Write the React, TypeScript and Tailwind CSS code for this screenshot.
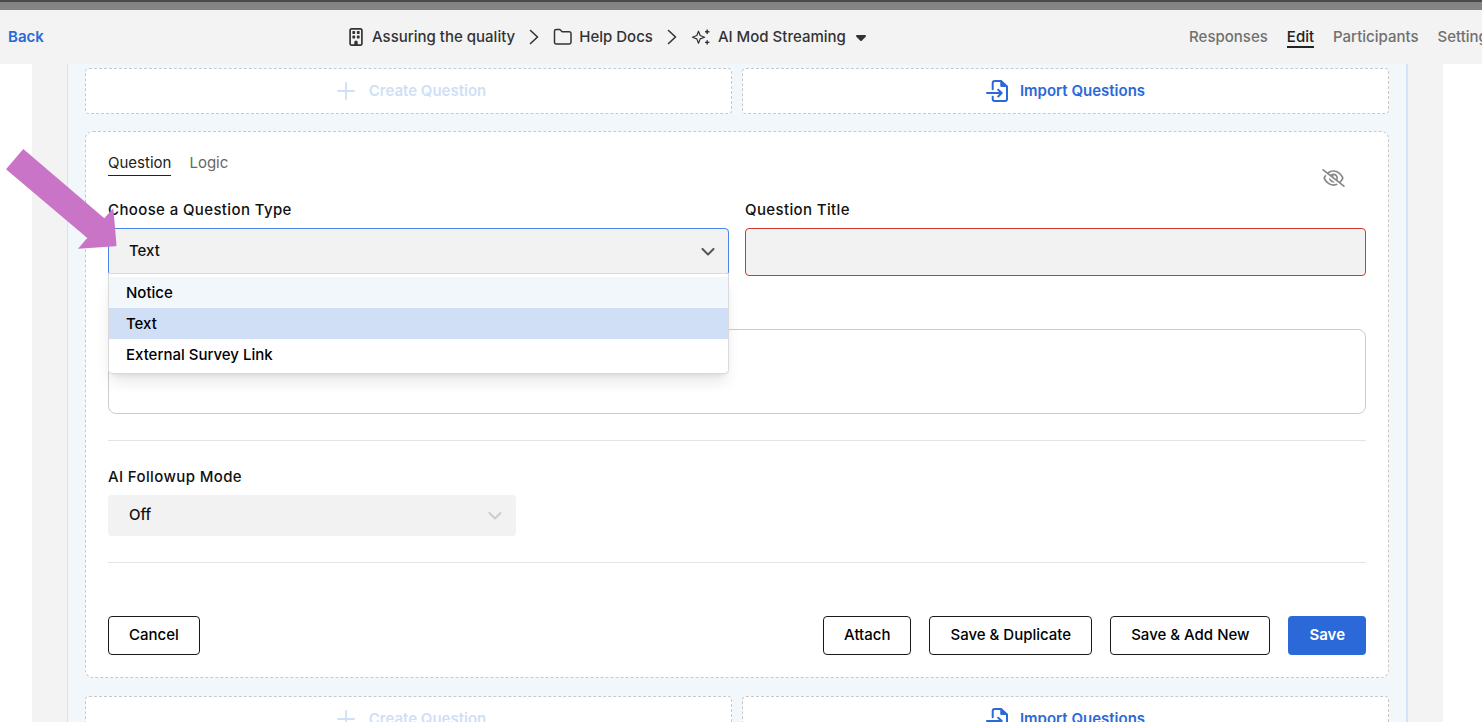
import React, { useState } from 'react';
import { FaRegBuilding, FaRegEyeSlash, FaCaretDown } from 'react-icons/fa6';

const questionTypes = ['Notice', 'Text', 'External Survey Link'];

const navLinks = [
  { name: 'Responses', href: '#responses' },
  { name: 'Edit', href: '#edit' },
  { name: 'Participants', href: '#participants' },
  { name: 'Settings', href: '#settings' },
];

const FolderIcon = () => (
  <svg className="h-5 w-5 shrink-0" viewBox="0 0 20 20" fill="none" stroke="currentColor" strokeWidth="1.5" strokeLinejoin="round">
    <path d="M1.5 4.2A1.7 1.7 0 0 1 3.2 2.5h3.6l2.4 2.2h7.1A1.7 1.7 0 0 1 18 6.4v8.9a1.7 1.7 0 0 1-1.7 1.7H3.2a1.7 1.7 0 0 1-1.7-1.7z" />
  </svg>
);

const SparkleIcon = () => (
  <svg className="h-5 w-5 shrink-0" viewBox="0 0 20 20" fill="none" stroke="currentColor" strokeWidth="1.2" strokeLinejoin="round">
    <path d="M7.5 4.2 9.2 8.5 13.6 10.2 9.2 11.9 7.5 16.2 5.8 11.9 1.4 10.2 5.8 8.5z" />
    <path d="M16.2 2.6v4.4M14 4.8h4.4M16.2 13.2v4.4M14 15.4h4.4" strokeWidth="1.4" />
  </svg>
);

const ChevronRight = () => (
  <svg className="h-4 w-3 shrink-0" viewBox="0 0 12 16" fill="none" stroke="currentColor" strokeWidth="1.6" strokeLinecap="round" strokeLinejoin="round">
    <path d="M2.5 1.5 9.5 8l-7 6.5" />
  </svg>
);

const ChevronDown = ({ className }: { className: string }) => (
  <svg className={`pointer-events-none absolute h-2 w-3.5 ${className}`} viewBox="0 0 14 8" fill="none" stroke="currentColor" strokeWidth="2" strokeLinecap="round" strokeLinejoin="round">
    <path d="M1.5 1 7 6.5 12.5 1" />
  </svg>
);

const PlusIcon = () => (
  <svg className="h-[18px] w-[18px]" viewBox="0 0 18 18" fill="none" stroke="currentColor" strokeWidth="1.8" strokeLinecap="round">
    <path d="M9 1v16M1 9h16" />
  </svg>
);

const ImportIcon = () => (
  <svg className="h-[22px] w-[22px]" viewBox="0 0 22 22" fill="none" stroke="currentColor" strokeWidth="2" strokeLinecap="round" strokeLinejoin="round">
    <path d="M6.7 9.2V3a2 2 0 0 1 2-2H15l6 5.6V19a2 2 0 0 1-2 2H8.7a2 2 0 0 1-2-2v-2.2" />
    <path d="M14.8 1.2v5.2h6z" fill="currentColor" strokeWidth="1" />
    <path d="M1 13.1h14.6M12.2 9.8l3.5 3.3-3.5 3.3" />
  </svg>
);

const AddRow = () => (
  <div className="grid grid-cols-2 gap-2.5 font-semibold">
    <button
      type="button"
      disabled
      className="flex h-[46px] items-center justify-center gap-3.5 rounded border border-dashed border-[#c8c8c8] bg-white pl-1.5 text-[#cfdff7]"
    >
      <PlusIcon />
      Create Question
    </button>
    <button
      type="button"
      className="flex h-[46px] items-center justify-center gap-3 rounded border border-dashed border-[#c8c8c8] bg-white text-[#2b69d9]"
    >
      <ImportIcon />
      Import Questions
    </button>
  </div>
);

const OutlineButton = ({ children }: { children: React.ReactNode }) => (
  <button type="button" className="h-[39px] rounded border border-[#1a1a1a] bg-white px-5 pb-0.5 text-black">
    {children}
  </button>
);

const App: React.FC = () => {
  const [questionType, setQuestionType] = useState('Text');
  const [open, setOpen] = useState(true);

  return (
    <div className="relative flex h-screen flex-col overflow-hidden bg-white font-['Inter',sans-serif] text-[15px] leading-5 font-medium text-[#111]">
      <div className="h-2.5 shrink-0 border-t-2 border-[#474b50] bg-[#848484]" />

      {/* Header */}
      <header className="flex h-[54px] shrink-0 items-center overflow-hidden bg-[#f3f3f3] pl-2 text-[#333]">
        <a href="#back" className="w-[339px] shrink-0 font-semibold text-[#2b69d9]">Back</a>
        <nav aria-label="Breadcrumb" className="flex items-center gap-[13px] whitespace-nowrap">
          <a href="#org" className="flex items-center gap-[7px]">
            <FaRegBuilding className="h-[18px] w-[18px]" />
            Assuring the quality
          </a>
          <ChevronRight />
          <a href="#folder" className="flex items-center gap-1.5">
            <FolderIcon />
            Help Docs
          </a>
          <ChevronRight />
          <button type="button" className="flex items-center gap-[7px]">
            <SparkleIcon />
            AI Mod Streaming
            <FaCaretDown className="h-4 w-4" />
          </button>
        </nav>
        <nav aria-label="Study" className="-mr-3.5 ml-auto flex gap-[19px] leading-[18px] text-[#707070]">
          {navLinks.map((link) => (
            <a
              key={link.name}
              href={link.href}
              className={`border-b-2 pt-0.5 ${link.name === 'Edit' ? 'border-[#222] text-[#222]' : 'border-transparent'}`}
            >
              {link.name}
            </a>
          ))}
        </nav>
      </header>

      {/* Editor */}
      <main className="mr-[39px] ml-8 flex min-h-0 flex-1 overflow-hidden bg-[#f3f3f3] px-[35px]">
        <div className="flex min-w-0 flex-1 flex-col border-r-2 border-l border-[#d3e2f8] bg-[#f2f7fc] px-[17px] pt-1">
          <AddRow />

          <form className="mt-[17px] mb-[18px] rounded-lg border border-dashed border-[#c8c8c8] bg-white px-[22px] pt-[21px] pb-[22px]" onSubmit={(e) => e.preventDefault()}>
            <div className="flex items-start justify-between">
              <div className="flex gap-[18px] font-normal text-[#666]">
                <button type="button" className="border-b border-[#222] pb-0.5 text-[#222]">Question</button>
                <button type="button" className="border-b border-transparent pb-0.5">Logic</button>
              </div>
              <button type="button" aria-label="Hide question" className="mt-4 mr-[21px] text-[#888]">
                <FaRegEyeSlash className="h-[18px] w-[23px]" />
              </button>
            </div>

            <div className="mt-[13px] grid grid-cols-2 gap-4">
              <div className="flex flex-col gap-2">
                <label htmlFor="question-type" className="tracking-wide">Choose a Question Type</label>
                <div className="relative">
                  <select
                    id="question-type"
                    value={questionType}
                    onChange={(e) => setQuestionType(e.target.value)}
                    onMouseDown={(e) => {
                      e.preventDefault();
                      setOpen(!open);
                    }}
                    className="block h-12 w-full appearance-none rounded border border-[#4a86e8] bg-[#f2f2f2] px-5 pb-0.5 outline-none"
                  >
                    {questionTypes.map((type) => (
                      <option key={type}>{type}</option>
                    ))}
                  </select>
                  <ChevronDown className="top-5 right-3.5 text-[#555]" />
                  {open && (
                    <ul
                      role="listbox"
                      aria-label="Question types"
                      className="absolute inset-x-0 top-[45px] z-10 rounded-b border border-[#dadada] bg-white py-[3px] text-black shadow-lg"
                    >
                      {questionTypes.map((type) => (
                        <li
                          key={type}
                          role="option"
                          aria-selected={type === questionType}
                          onClick={() => {
                            setQuestionType(type);
                            setOpen(false);
                          }}
                          className={`flex h-[31px] cursor-pointer items-center px-[17px] ${
                            type === questionType ? 'bg-[#d0dff6]' : type === 'Notice' ? 'bg-[#f2f7fc]' : ''
                          }`}
                        >
                          {type}
                        </li>
                      ))}
                    </ul>
                  )}
                </div>
              </div>
              <div className="flex flex-col gap-2">
                <label htmlFor="question-title" className="tracking-wide">Question Title</label>
                <input id="question-title" className="h-12 w-full rounded border border-[#cf3a32] bg-[#f2f2f2] px-5 outline-none" />
              </div>
            </div>

            <textarea
              aria-label="Question text"
              className="mt-[53px] block h-[85px] w-full resize-none rounded-lg border border-[#ccc] px-5 py-3 outline-none"
            />

            <hr className="mt-[26px] border-[#e4e4e4]" />

            <label htmlFor="followup-mode" className="mt-[26px] block tracking-wide">AI Followup Mode</label>
            <div className="relative mt-2 w-[408px]">
              <select id="followup-mode" className="block h-[41px] w-full appearance-none rounded bg-[#f2f2f2] px-[21px] pb-0.5 outline-none">
                <option>Off</option>
                <option>On</option>
              </select>
              <ChevronDown className="top-[17px] right-3.5 text-[#ccc]" />
            </div>

            <hr className="mt-[26px] border-[#e4e4e4]" />

            <div className="mt-[53px] flex items-center justify-between">
              <OutlineButton>Cancel</OutlineButton>
              <div className="flex gap-[18px]">
                <OutlineButton>Attach</OutlineButton>
                <OutlineButton>Save &amp; Duplicate</OutlineButton>
                <OutlineButton>Save &amp; Add New</OutlineButton>
                <button type="submit" className="h-[39px] rounded bg-[#2b69d9] px-[21px] pb-0.5 font-semibold text-white">Save</button>
              </div>
            </div>
          </form>

          <AddRow />
        </div>
      </main>

      {/* Arrow pointing at the question type field */}
      <svg className="pointer-events-none absolute top-36 left-0 z-20 h-[110px] w-[120px]" viewBox="0 144 120 110" fill="#c974c6">
        <path d="M23.3 149 6 169.2 87.3 238 78 248.7 115.5 246.3Q116.6 246 116.5 245L113.3 208.3 104.3 218.2z" />
      </svg>
    </div>
  );
};

export default App;
